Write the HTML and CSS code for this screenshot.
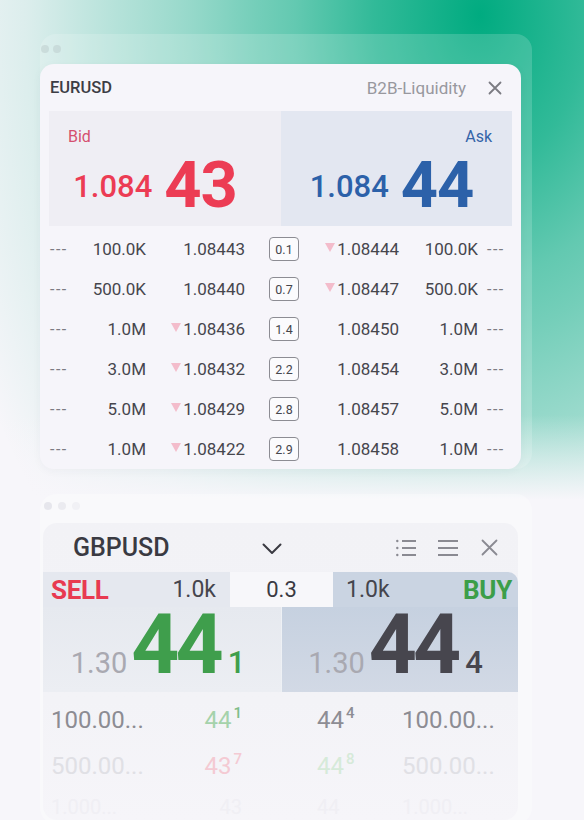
FILE: index.html
```html
<!DOCTYPE html>
<html lang="en">
<head>
<meta charset="utf-8">
<title>Quotes</title>
<link rel="stylesheet" href="styles.css">
</head>
<body>
<div class="page">
  <section class="back back-top">
    <div class="dots"><span class="dot"></span><span class="dot"></span></div>
    <div class="card card-eur">
      <div class="eur-head">
        <span class="eur-title">EURUSD</span>
        <span class="eur-right">
          <span class="eur-src">B2B-Liquidity</span>
          <svg class="ic-x" width="14" height="14" viewBox="0 0 14 14"><path d="M1.5 1.5L12.5 12.5M12.5 1.5L1.5 12.5" stroke="#7b7b82" stroke-width="1.8" stroke-linecap="round"/></svg>
        </span>
      </div>
      <div class="quote">
        <div class="q-half q-bid">
          <div class="q-label">Bid</div>
          <div class="q-price"><span class="q-small">1.084</span><span class="q-big">43</span></div>
        </div>
        <div class="q-half q-ask">
          <div class="q-label">Ask</div>
          <div class="q-price"><span class="q-small">1.084</span><span class="q-big">44</span></div>
        </div>
      </div>
      <div class="book">
        <div class="row"><span class="dash">---</span><span class="num">100.0K</span><span class="num">1.08443</span><span class="sp"><span class="spbox">0.1</span></span><span class="num"><i class="tri"></i>1.08444</span><span class="num">100.0K</span><span class="dash dash-r">---</span></div>
        <div class="row"><span class="dash">---</span><span class="num">500.0K</span><span class="num">1.08440</span><span class="sp"><span class="spbox">0.7</span></span><span class="num"><i class="tri"></i>1.08447</span><span class="num">500.0K</span><span class="dash dash-r">---</span></div>
        <div class="row"><span class="dash">---</span><span class="num">1.0M</span><span class="num"><i class="tri"></i>1.08436</span><span class="sp"><span class="spbox">1.4</span></span><span class="num">1.08450</span><span class="num">1.0M</span><span class="dash dash-r">---</span></div>
        <div class="row"><span class="dash">---</span><span class="num">3.0M</span><span class="num"><i class="tri"></i>1.08432</span><span class="sp"><span class="spbox">2.2</span></span><span class="num">1.08454</span><span class="num">3.0M</span><span class="dash dash-r">---</span></div>
        <div class="row"><span class="dash">---</span><span class="num">5.0M</span><span class="num"><i class="tri"></i>1.08429</span><span class="sp"><span class="spbox">2.8</span></span><span class="num">1.08457</span><span class="num">5.0M</span><span class="dash dash-r">---</span></div>
        <div class="row"><span class="dash">---</span><span class="num">1.0M</span><span class="num"><i class="tri"></i>1.08422</span><span class="sp"><span class="spbox">2.9</span></span><span class="num">1.08458</span><span class="num">1.0M</span><span class="dash dash-r">---</span></div>
      </div>
    </div>
  </section>

  <section class="back back-bottom">
    <div class="dots dots2"><span class="dot d1"></span><span class="dot d2"></span><span class="dot d3"></span></div>
    <div class="card card-gbp">
      <div class="gbp-head">
        <span class="gbp-title">GBPUSD</span>
        <svg class="ic-chev" width="20" height="12" viewBox="0 0 20 12"><path d="M1.5 1.5L10 10L18.5 1.5" fill="none" stroke="#3a3a42" stroke-width="2" stroke-linecap="round" stroke-linejoin="round"/></svg>
        <span class="spacer"></span>
        <svg class="ic-list" width="20" height="18" viewBox="0 0 20 18"><g fill="#8a8a92"><circle cx="1.3" cy="2" r="1.2"/><circle cx="1.3" cy="9" r="1.2"/><circle cx="1.3" cy="16" r="1.2"/></g><g stroke="#8a8a92" stroke-width="2"><path d="M6 2H20M6 9H20M6 16H20"/></g></svg>
        <svg class="ic-menu" width="20" height="18" viewBox="0 0 20 18"><g stroke="#8a8a92" stroke-width="2"><path d="M0 2H20M0 9H20M0 16H20"/></g></svg>
        <svg class="ic-x2" width="17" height="17" viewBox="0 0 17 17"><path d="M1.5 1.5L15.5 15.5M15.5 1.5L1.5 15.5" stroke="#8a8a92" stroke-width="1.8" stroke-linecap="round"/></svg>
      </div>
      <div class="trade">
        <div class="strip">
          <div class="s-left"><span class="sell">SELL</span><span class="lot">1.0k</span></div>
          <div class="s-mid">0.3</div>
          <div class="s-right"><span class="lot">1.0k</span><span class="buy">BUY</span></div>
        </div>
        <div class="lower">
          <div class="l-half l-sell"><span class="p-pre">1.30</span><span class="p-big">44</span><span class="p-pip">1</span></div>
          <div class="l-half l-buy"><span class="p-pre">1.30</span><span class="p-big">44</span><span class="p-pip">4</span></div>
        </div>
      </div>
      <div class="depth">
        <div class="drow r1"><span class="dv">100.00...</span><span class="dp dp-g">44<sup>1</sup></span><span class="dp dp-k">44<sup>4</sup></span><span class="dv">100.00...</span></div>
        <div class="drow r2"><span class="dv">500.00...</span><span class="dp dp-r">43<sup>7</sup></span><span class="dp dp-g2">44<sup>8</sup></span><span class="dv">500.00...</span></div>
        <div class="drow r3"><span class="dv">1.000...</span><span class="dp">43</span><span class="dp">44</span><span class="dv">1.000...</span></div>
      </div>
    </div>
  </section>
</div>
</body>
</html>
```

FILE: styles.css
```css
* { box-sizing: border-box; }

html, body {
  margin: 0;
  padding: 0;
}

body {
  width: 584px;
  height: 820px;
  overflow: hidden;
  font-family: Roboto, "Liberation Sans", Arial, sans-serif;
  background-color: #f7f6fa;
  background-image:
    linear-gradient(to bottom,
      rgba(247, 246, 250, 0) 0px,
      rgba(247, 246, 250, 0) 415px,
      rgba(247, 246, 250, 1) 500px),
    radial-gradient(ellipse 560px 800px at 480px 15px,
      rgba(0, 171, 128, 1) 0%,
      rgba(0, 171, 128, 0.8) 19%,
      rgba(0, 171, 128, 0.6) 33%,
      rgba(0, 171, 128, 0.53) 40%,
      rgba(0, 171, 128, 0.39) 52%,
      rgba(0, 171, 128, 0.22) 70%,
      rgba(0, 171, 128, 0.11) 81%,
      rgba(0, 171, 128, 0) 100%);
  background-repeat: no-repeat;
}

.page {
  padding: 34px 52px 0 40px;
}

.back {
  border-radius: 16px;
}

.back-top {
  background: rgba(255, 255, 255, 0.17);
}

.back-bottom {
  margin-top: 25px;
  background: rgba(255, 255, 255, 0.3);
  height: 330px;
}

.dots {
  height: 30px;
  display: flex;
  align-items: center;
  gap: 4px;
  padding-left: 1px;
}

.dot {
  width: 8px;
  height: 8px;
  border-radius: 50%;
  background: rgba(190, 205, 205, 0.55);
}

.dots2 {
  height: 29px;
  padding-bottom: 5px;
  padding-left: 4px;
  gap: 6px;
}

.dots2 .d1 { background: #e6e6ec; }
.dots2 .d2 { background: #ebebf0; }
.dots2 .d3 { background: #f1f1f5; }

.card {
  border-radius: 14px;
}

/* ---------- EURUSD card ---------- */
.card-eur {
  width: 481px;
  background: #f6f5fa;
  box-shadow: 0 2px 10px rgba(40, 60, 80, 0.04);
}

.eur-head {
  height: 47px;
  display: flex;
  align-items: center;
  justify-content: space-between;
  padding: 0 19px 0 10px;
}

.eur-title {
  font-size: 16.5px;
  font-weight: 500;
  color: #3d3d45;
}

.eur-right {
  display: flex;
  align-items: center;
}

.eur-src {
  font-size: 17px;
  color: #98989e;
  margin-right: 22px;
}

.quote {
  margin: 0 9px;
  height: 115px;
  display: grid;
  grid-template-columns: 232px 231px;
}

.q-half {
  padding-top: 16px;
}

.q-bid {
  background: #efeef4;
  color: #ec3c54;
}

.q-ask {
  background: #e3e7f1;
  color: #2c61a9;
}

.q-label {
  font-size: 16px;
  line-height: 20px;
}

.q-bid .q-label {
  padding-left: 19px;
  color: #d5506f;
}

.q-ask .q-label {
  text-align: right;
  padding-right: 20px;
  color: #3464a8;
}

.q-price {
  margin-top: 6px;
  display: flex;
  align-items: center;
  justify-content: center;
}

.q-bid .q-price { padding-right: 20px; }
.q-ask .q-price { padding-right: 10px; }

.q-small {
  font-size: 31px;
  font-weight: 500;
  margin-right: 12px;
  margin-top: 2px;
}

.q-big {
  font-size: 65px;
  line-height: 1;
  font-weight: 700;
  letter-spacing: -1px;
}

.book {
  padding: 3px 0 0 10px;
}

.row {
  height: 40px;
  display: grid;
  grid-template-columns: 30px 66px 99px 78px 76px 79px 33px;
  align-items: center;
  font-size: 17px;
  color: #46464d;
}

.num {
  text-align: right;
  white-space: nowrap;
}

.dash {
  color: #7c7c83;
  font-size: 16px;
  letter-spacing: 1.5px;
}

.dash-r {
  padding-left: 9px;
}

.sp {
  display: flex;
  justify-content: center;
}

.spbox {
  width: 30px;
  height: 24px;
  border: 1.3px solid #8c8c93;
  border-radius: 4px;
  background: #fbfbfd;
  font-size: 12.5px;
  color: #45454c;
  display: flex;
  align-items: center;
  justify-content: center;
}

.tri {
  display: inline-block;
  width: 0;
  height: 0;
  border-left: 5px solid transparent;
  border-right: 5px solid transparent;
  border-top: 9px solid #f3bccb;
  margin-right: 2px;
  vertical-align: 3px;
}

/* ---------- GBPUSD card ---------- */
.card-gbp {
  margin-left: 3px;
  width: 475px;
  height: 297px;
  background: linear-gradient(#f2f2f6 0%, #f3f3f7 60%, #f6f5f9 100%);
}

.gbp-head {
  height: 49px;
  display: flex;
  align-items: center;
  padding: 0 20px 0 30px;
}

.gbp-title {
  width: 189px;
  font-size: 25px;
  font-weight: 500;
  color: #3a3a42;
}

.ic-chev { margin-top: 2px; }

.spacer { flex: 1; }

.ic-menu { margin-left: 22px; }
.ic-x2 { margin-left: 23px; }

.strip {
  height: 35px;
  display: flex;
}

.s-left {
  width: 187px;
  background: #e5e8ef;
  display: flex;
  align-items: center;
  justify-content: space-between;
  padding: 0 14px 0 8px;
}

.s-mid {
  width: 103px;
  background: #f7f7fa;
  display: flex;
  align-items: center;
  justify-content: center;
  font-size: 22px;
  color: #3a3a42;
}

.s-right {
  width: 185px;
  background: #cad4e2;
  border-top-right-radius: 10px;
  display: flex;
  align-items: center;
  justify-content: space-between;
  padding: 0 6px 0 13px;
}

.sell, .buy {
  font-size: 26px;
  font-weight: 700;
  letter-spacing: -0.3px;
}

.sell { color: #e83a51; }
.buy { color: #3c9e49; }

.lot {
  font-size: 23px;
  color: #45454d;
}

.lower {
  height: 85px;
  display: grid;
  grid-template-columns: 238px 237px;
}

.l-half {
  display: flex;
  align-items: baseline;
  justify-content: center;
}

.l-sell {
  background: linear-gradient(#e6e9ef, #eceef3);
  padding-right: 8px;
  color: #3f9e4c;
}

.l-buy {
  background: linear-gradient(#c6d1e0, #d2d9e5);
  border-left: 1px solid #eef1f5;
  padding-right: 9px;
  color: #47464e;
}

.p-pre {
  font-size: 29px;
  color: #a9a9b1;
  margin-right: 4px;
}

.p-big {
  font-size: 84px;
  line-height: 75px;
  font-weight: 700;
  letter-spacing: -4px;
}

.p-pip {
  font-size: 31px;
  font-weight: 500;
  margin-left: 8px;
}

.depth {
  padding: 5px 0 0 8px;
}

.drow {
  height: 46px;
  display: grid;
  grid-template-columns: 109px 82px 160px 1fr;
  align-items: center;
  font-size: 24px;
  line-height: 28px;
  white-space: nowrap;
}

.dp {
  text-align: right;
}

.drow .dp:nth-child(3) {
  text-align: left;
  padding-left: 75px;
}

sup {
  font-size: 15px;
  font-weight: 500;
  vertical-align: 10px;
  line-height: 1;
  margin-left: 2px;
}

.r1 .dv { color: #8c8c93; }
.r1 .dp-g { color: #a5d2ab; }
.r1 .dp-g sup { color: #7fbd88; }
.r1 .dp-k { color: #8d8d94; }

.r2 .dv { color: #e0e0e5; }
.r2 .dp-r { color: #f4cad3; }
.r2 .dp-g2 { color: #d6ead9; }

.r3 {
  height: 20px;
  margin-top: 8px;
  font-size: 20px;
  line-height: 20px;
  color: #f0eff4;
}
```
